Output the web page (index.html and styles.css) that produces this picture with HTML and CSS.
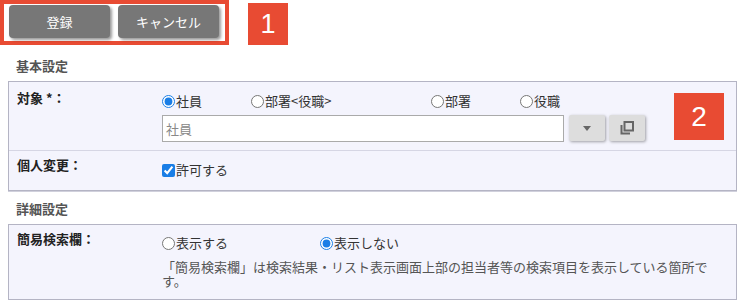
FILE: index.html
```html
<!DOCTYPE html>
<html lang="ja">
<head>
  <meta charset="UTF-8">
  <title>設定</title>
  <link rel="stylesheet" href="styles.css">
</head>
<body>

  <div class="barra">
    <div class="botones">
      <button class="boton">登録</button>
      <button class="boton">キャンセル</button>
    </div>
    <span class="marca">1</span>
  </div>

  <h3 class="titulo">基本設定</h3>
  <div class="panel">
    <span class="marca marca-dos">2</span>
    <div class="fila">
      <div class="etiqueta">対象 *：</div>
      <div class="campo campo-alto">
        <div class="opciones">
          <label class="opcion ancho-1"><input type="radio" name="taisho" checked>社員</label>
          <label class="opcion ancho-2"><input type="radio" name="taisho">部署&lt;役職&gt;</label>
          <label class="opcion ancho-1"><input type="radio" name="taisho">部署</label>
          <label class="opcion"><input type="radio" name="taisho">役職</label>
        </div>
        <div class="selector">
          <input class="entrada" type="text" placeholder="社員">
          <button class="mini"><span class="flecha"></span></button>
          <button class="mini">
            <svg width="14" height="14" viewBox="0 0 14 14" fill="none" stroke="#666" stroke-width="2">
              <path d="M1.5 4v8.5H10"/>
              <rect x="4.5" y="1" width="8.5" height="8.5"/>
            </svg>
          </button>
        </div>
      </div>
    </div>
    <div class="fila">
      <div class="etiqueta etiqueta-baja">個人変更：</div>
      <div class="campo">
        <label class="opcion"><input type="checkbox" checked>許可する</label>
      </div>
    </div>
  </div>

  <h3 class="titulo titulo-dos">詳細設定</h3>
  <div class="panel">
    <div class="fila">
      <div class="etiqueta etiqueta-baja">簡易検索欄：</div>
      <div class="campo campo-medio">
        <div class="opciones">
          <label class="opcion ancho-3"><input type="radio" name="kensaku">表示する</label>
          <label class="opcion"><input type="radio" name="kensaku" checked>表示しない</label>
        </div>
        <p class="nota">「簡易検索欄」は検索結果・リスト表示画面上部の担当者等の検索項目を表示している箇所です。</p>
      </div>
    </div>
  </div>

</body>
</html>
```

FILE: styles.css
```css
* {
  margin: 0;
  padding: 0;
  box-sizing: border-box;
  font-family: "Noto Sans CJK JP", "Noto Sans", sans-serif;
}

body {
  background: #ffffff;
  color: #333;
  font-size: 13px;
  width: 753px;
}

/* Barra superior */
.barra {
  display: flex;
  align-items: flex-start;
  height: 45px;
}
.botones {
  display: flex;
  gap: 8px;
  border: 4px solid #e84b33;
  padding: 1px 6px 3px 5px;
}
.boton {
  width: 101px;
  height: 33px;
  background: #777;
  color: #fff;
  border: none;
  border-radius: 4px;
  box-shadow: 2px 2px 3px rgba(0, 0, 0, 0.4);
  font-size: 13px;
}

.marca {
  display: flex;
  align-items: center;
  justify-content: center;
  width: 40px;
  height: 42px;
  margin: 3px 0 0 19px;
  background: #e84b33;
  color: #fff;
  font-family: "Liberation Sans", Arial, sans-serif;
  font-size: 27px;
}
.marca-dos {
  position: absolute;
  left: 665px;
  top: 11px;
  width: 50px;
  height: 47px;
  margin: 0;
  font-size: 28px;
}

/* Secciones */
.titulo {
  padding: 12px 16px 6px;
  line-height: 18px;
  font-size: 13px;
  font-weight: bold;
  color: #555;
}
.titulo-dos {
  padding-top: 9px;
}

.panel {
  position: relative;
  width: 729px;
  margin-left: 8px;
  background: #f4f4fd;
  border: 1px solid #b4b4c4;
  box-shadow: 0 1px 0 #d0d0dc;
}

.fila {
  display: flex;
  border-bottom: 1px solid #d6d6e4;
}
.fila:last-child {
  border-bottom: none;
}

.etiqueta {
  width: 153px;
  padding: 7px 0 0 8px;
  line-height: 18px;
  font-weight: bold;
  color: #222;
}
.etiqueta-baja {
  padding-top: 5px;
}

.campo {
  flex: 1;
  padding: 10px 0 11px;
  line-height: 18px;
}
.campo-alto {
  padding-bottom: 8px;
}
.campo-medio {
  padding: 9px 0 11px;
}

.opciones {
  display: flex;
}
.opcion {
  display: flex;
  align-items: center;
  color: #333;
}
.opcion input {
  width: 13px;
  height: 13px;
  margin: 0 1px 0 0;
  accent-color: #1a7ee6;
}
.ancho-1 { width: 89px; }
.ancho-2 { width: 180px; }
.ancho-3 { width: 158px; }

/* Selector */
.selector {
  display: flex;
  gap: 4px;
  margin-top: 5px;
}
.entrada {
  width: 402px;
  height: 27px;
  border: 1px solid #aaa;
  padding: 0 3px;
  font-size: 13px;
  background: #fff;
  margin-right: 1px;
}
.entrada::placeholder {
  color: #888;
}
.mini {
  display: flex;
  align-items: center;
  justify-content: center;
  width: 36px;
  height: 26px;
  background: #dddddd;
  border: none;
  border-radius: 2px;
  box-shadow: 1px 1px 3px rgba(0, 0, 0, 0.35);
}
.flecha {
  width: 0;
  height: 0;
  border-left: 4px solid transparent;
  border-right: 4px solid transparent;
  border-top: 5px solid #666;
}

.nota {
  width: 552px;
  margin-top: 8px;
  line-height: 14px;
  color: #555;
}
```
